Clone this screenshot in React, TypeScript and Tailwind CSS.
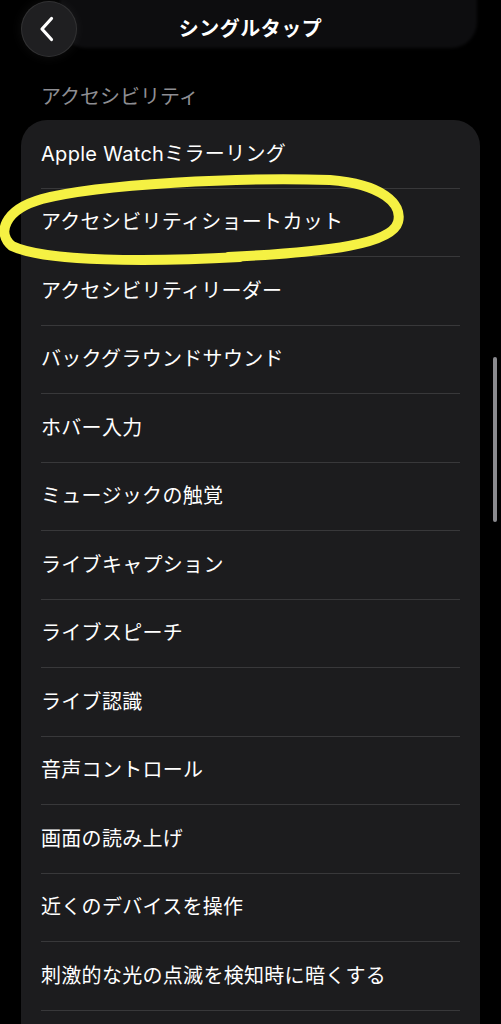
import React from 'react';

const items = [
    'Apple Watchミラーリング',
    'アクセシビリティショートカット',
    'アクセシビリティリーダー',
    'バックグラウンドサウンド',
    'ホバー入力',
    'ミュージックの触覚',
    'ライブキャプション',
    'ライブスピーチ',
    'ライブ認識',
    '音声コントロール',
    '画面の読み上げ',
    '近くのデバイスを操作',
    '刺激的な光の点滅を検知時に暗くする',
    '',
];

const App: React.FC = () => {
    return (
        <div className="relative w-[501px] h-[1024px] overflow-hidden bg-black font-['Inter','Noto_Sans_CJK_JP',sans-serif] text-white">

            {/* Header */}
            <div className="relative h-[57px] flex items-center px-[21px]">
                <div className="absolute left-[60px] right-[24px] top-[-24px] h-[72px] rounded-b-[26px] bg-[#0d0d0f] blur-[1.5px]"></div>
                <button className="relative z-10 w-[56px] h-[56px] mt-[1px] rounded-full bg-[#1f1f21] border border-[#3a3a3c]/70 shadow-[0_0_12px_rgba(255,255,255,0.06)] flex items-center justify-center">
                    <svg width="16" height="26" viewBox="0 0 16 26" className="-ml-[4px]">
                        <path d="M12.5 2.5 L3 13 L12.5 23.5" fill="none" stroke="white" strokeWidth="3.2" strokeLinecap="round" strokeLinejoin="round" />
                    </svg>
                </button>
                <h1 className="relative z-10 flex-1 text-center text-[20px] font-bold tracking-[0.5px]">シングルタップ</h1>
                <div className="w-[56px]"></div>
            </div>

            {/* Section label */}
            <div className="mt-[27px] mb-[9px] px-[41px] text-[20px] leading-[27px] text-[#8e8e93]">アクセシビリティ</div>

            {/* List card */}
            <div className="mx-[21px] rounded-[26px] bg-[#1c1c1e] px-[20px]">
                {items.map((label, i) => (
                    <div
                        key={i}
                        className={`h-[68.5px] flex items-center text-[20px] tracking-[0.3px] ${i < items.length - 1 ? 'border-b border-[#38383a]' : ''}`}
                    >
                        {label}
                    </div>
                ))}
            </div>

            {/* Scroll indicator */}
            <div className="absolute left-[493px] top-[357px] w-[4px] h-[165px] rounded-full bg-[#8a8a8e]"></div>

            {/* Hand-drawn highlight */}
            <svg className="absolute left-0 top-0 pointer-events-none" width="501" height="300" viewBox="0 0 501 300">
                <path
                    d="M240 257 C 150 262, 45 262, 12 246 C -3 234, 3 210, 42 199 C 100 184, 240 177, 330 180 C 382 184, 403 204, 398 222 C 392 244, 330 252, 228 257"
                    fill="none"
                    stroke="#f5f143"
                    strokeWidth="10"
                    strokeLinecap="round"
                    strokeLinejoin="round"
                />
            </svg>
        </div>
    );
};

export default App;
